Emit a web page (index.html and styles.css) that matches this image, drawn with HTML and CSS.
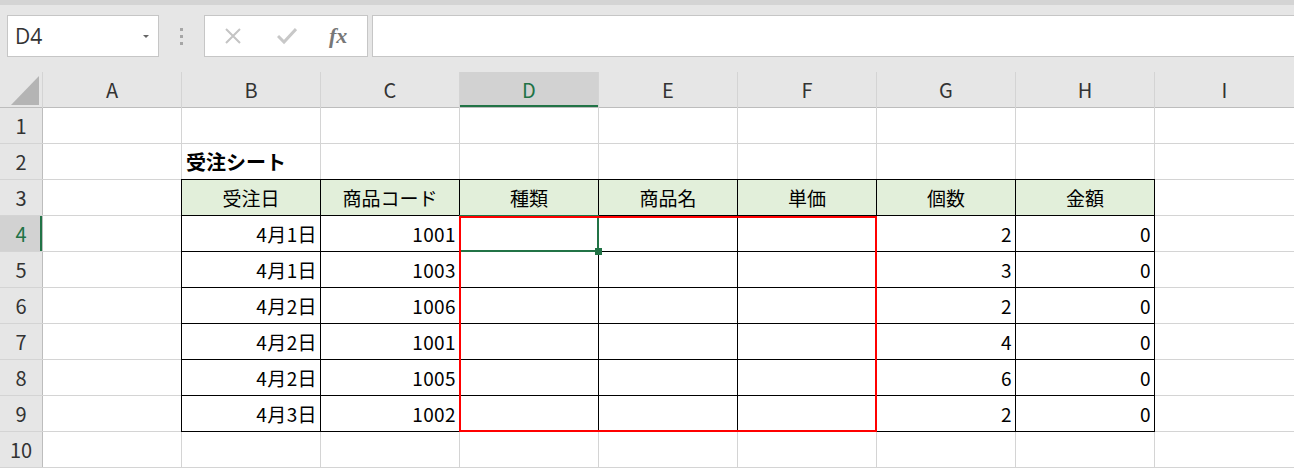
FILE: index.html
```html
<!DOCTYPE html>
<html lang="ja">
<head>
    <meta charset="UTF-8">
    <title>受注シート</title>
    <link rel="stylesheet" href="styles.css">
</head>
<body>
    <div class="toolbar">
        <div class="name-box">
            <span class="name-text">D4</span>
            <span class="name-arrow"></span>
        </div>
        <div class="grip"><span></span><span></span><span></span></div>
        <div class="fx-box">
            <svg class="fx-icon" width="18" height="18" viewBox="0 0 18 18">
                <path d="M2 2 L16 16 M16 2 L2 16" stroke="#c4c4c4" stroke-width="2" fill="none"/>
            </svg>
            <svg class="fx-icon" width="20" height="18" viewBox="0 0 20 18">
                <path d="M1 9 L7 15 L19 2" stroke="#c8c8c8" stroke-width="3" fill="none"/>
            </svg>
            <span class="fx-text">fx</span>
        </div>
        <div class="formula-input"></div>
    </div>

    <div class="sheet">
        <!-- column headers -->
        <div class="cell ch corner">
            <svg width="28" height="29" viewBox="0 0 28 29"><polygon points="28,0 28,29 0,29" fill="#b4b4b4"/></svg>
        </div>
        <div class="cell ch">A</div>
        <div class="cell ch">B</div>
        <div class="cell ch">C</div>
        <div class="cell ch active">D</div>
        <div class="cell ch">E</div>
        <div class="cell ch">F</div>
        <div class="cell ch">G</div>
        <div class="cell ch">H</div>
        <div class="cell ch">I</div>

        <!-- row 1 -->
        <div class="cell rh">1</div>
        <div class="cell"></div><div class="cell"></div><div class="cell"></div><div class="cell"></div>
        <div class="cell"></div><div class="cell"></div><div class="cell"></div><div class="cell"></div><div class="cell"></div>

        <!-- row 2 -->
        <div class="cell rh">2</div>
        <div class="cell"></div>
        <div class="cell title">受注シート</div>
        <div class="cell"></div><div class="cell"></div><div class="cell"></div>
        <div class="cell"></div><div class="cell"></div><div class="cell"></div><div class="cell"></div>

        <!-- row 3: table header -->
        <div class="cell rh">3</div>
        <div class="cell"></div>
        <div class="cell t th">受注日</div>
        <div class="cell t th">商品コード</div>
        <div class="cell t th">種類</div>
        <div class="cell t th">商品名</div>
        <div class="cell t th">単価</div>
        <div class="cell t th">個数</div>
        <div class="cell t th">金額</div>
        <div class="cell"></div>

        <!-- row 4 -->
        <div class="cell rh active">4</div>
        <div class="cell"></div>
        <div class="cell t num">4月1日</div>
        <div class="cell t num">1001</div>
        <div class="cell t current">
            <div class="sel-cell"></div>
            <div class="sel-range"></div>
            <div class="fill-handle"></div>
        </div>
        <div class="cell t"></div>
        <div class="cell t"></div>
        <div class="cell t num">2</div>
        <div class="cell t num">0</div>
        <div class="cell"></div>

        <!-- row 5 -->
        <div class="cell rh">5</div>
        <div class="cell"></div>
        <div class="cell t num">4月1日</div>
        <div class="cell t num">1003</div>
        <div class="cell t"></div><div class="cell t"></div><div class="cell t"></div>
        <div class="cell t num">3</div>
        <div class="cell t num">0</div>
        <div class="cell"></div>

        <!-- row 6 -->
        <div class="cell rh">6</div>
        <div class="cell"></div>
        <div class="cell t num">4月2日</div>
        <div class="cell t num">1006</div>
        <div class="cell t"></div><div class="cell t"></div><div class="cell t"></div>
        <div class="cell t num">2</div>
        <div class="cell t num">0</div>
        <div class="cell"></div>

        <!-- row 7 -->
        <div class="cell rh">7</div>
        <div class="cell"></div>
        <div class="cell t num">4月2日</div>
        <div class="cell t num">1001</div>
        <div class="cell t"></div><div class="cell t"></div><div class="cell t"></div>
        <div class="cell t num">4</div>
        <div class="cell t num">0</div>
        <div class="cell"></div>

        <!-- row 8 -->
        <div class="cell rh">8</div>
        <div class="cell"></div>
        <div class="cell t num">4月2日</div>
        <div class="cell t num">1005</div>
        <div class="cell t"></div><div class="cell t"></div><div class="cell t"></div>
        <div class="cell t num">6</div>
        <div class="cell t num">0</div>
        <div class="cell"></div>

        <!-- row 9 -->
        <div class="cell rh">9</div>
        <div class="cell"></div>
        <div class="cell t num">4月3日</div>
        <div class="cell t num">1002</div>
        <div class="cell t"></div><div class="cell t"></div><div class="cell t"></div>
        <div class="cell t num">2</div>
        <div class="cell t num">0</div>
        <div class="cell"></div>

        <!-- row 10 -->
        <div class="cell rh">10</div>
        <div class="cell"></div><div class="cell"></div><div class="cell"></div><div class="cell"></div>
        <div class="cell"></div><div class="cell"></div><div class="cell"></div><div class="cell"></div><div class="cell"></div>
    </div>
</body>
</html>
```

FILE: styles.css
```css
* {
    box-sizing: border-box;
}

body {
    margin: 0;
    padding: 0;
    background-color: #d4d4d4;
    font-family: "Noto Sans CJK JP", "Noto Sans", sans-serif;
    overflow: hidden;
}

/* formula bar */
.toolbar {
    display: flex;
    align-items: center;
    height: 72px;
    padding: 10px 0 15px 7px;
    background-color: #e6e6e6;
    border-top: 5px solid #d4d4d4;
}

.name-box {
    display: flex;
    align-items: center;
    justify-content: space-between;
    width: 152px;
    height: 42px;
    padding: 0 9px 0 7px;
    background-color: #fff;
    border: 1px solid #c6c6c6;
}

.name-text {
    font-family: "Open Sans", "Noto Sans", sans-serif;
    font-size: 21px;
    color: #333;
}

.name-arrow {
    width: 0;
    height: 0;
    border-left: 3.5px solid transparent;
    border-right: 3.5px solid transparent;
    border-top: 3px solid #666;
}

.grip {
    display: flex;
    flex-direction: column;
    gap: 4px;
    width: 45px;
    align-items: center;
}

.grip span {
    width: 3px;
    height: 3px;
    background-color: #a6a6a6;
}

.fx-box {
    display: flex;
    align-items: center;
    width: 164px;
    height: 42px;
    padding-left: 19px;
    background-color: #fff;
    border: 1px solid #c6c6c6;
}

.fx-icon {
    margin-right: 35px;
}

.fx-text {
    font-family: "Liberation Serif", serif;
    font-style: italic;
    font-weight: bold;
    font-size: 22px;
    color: #777;
    margin-left: -3px;
}

.formula-input {
    flex: 1;
    height: 42px;
    margin-left: 4px;
    margin-right: -2px;
    background-color: #fff;
    border: 1px solid #c6c6c6;
}

/* grid */
.sheet {
    display: grid;
    grid-template-columns: 42px repeat(8, 138px) 1fr;
    grid-auto-rows: 35px;
    gap: 1px;
    padding-bottom: 1px;
    background-color: #d4d4d4;
}

.cell {
    display: flex;
    align-items: center;
    background-color: #fff;
    font-size: 19px;
    line-height: 1;
    color: #000;
    white-space: nowrap;
}

.ch,
.rh {
    justify-content: center;
    background-color: #e6e6e6;
    color: #333;
    font-size: 20px;
}

.ch {
    box-shadow: 0 1px 0 #bdbdbd;
}

.rh {
    box-shadow: 1px 0 0 #bdbdbd;
}

.corner {
    justify-content: flex-end;
    align-items: flex-end;
    padding: 0 3px 2px 0;
}

.ch.active {
    background-color: #d2d2d2;
    color: #217346;
    box-shadow: inset 0 -2px 0 #217346, 0 1px 0 #bdbdbd;
}

.rh.active {
    background-color: #d2d2d2;
    color: #217346;
    box-shadow: inset -2px 0 0 #217346, 1px 0 0 #bdbdbd;
}

.title {
    padding-left: 4px;
    font-weight: bold;
    font-size: 20px;
}

/* bordered table */
.t {
    box-shadow: 0 0 0 1px #000;
}

.th {
    justify-content: center;
    background-color: #e2efda;
}

.num {
    justify-content: flex-end;
    padding-right: 3px;
    letter-spacing: 0.4px;
}

/* selection */
.current {
    position: relative;
}

.sel-cell {
    position: absolute;
    left: -1px;
    top: -1px;
    width: 140px;
    height: 37px;
    border: 2px solid #217346;
    z-index: 1;
}

.sel-range {
    position: absolute;
    left: -1px;
    top: 0;
    width: 418px;
    height: 216px;
    border: 2px solid #ff0000;
    z-index: 2;
}

.fill-handle {
    position: absolute;
    left: 135px;
    top: 32px;
    width: 7px;
    height: 7px;
    background-color: #217346;
    z-index: 3;
}
```
